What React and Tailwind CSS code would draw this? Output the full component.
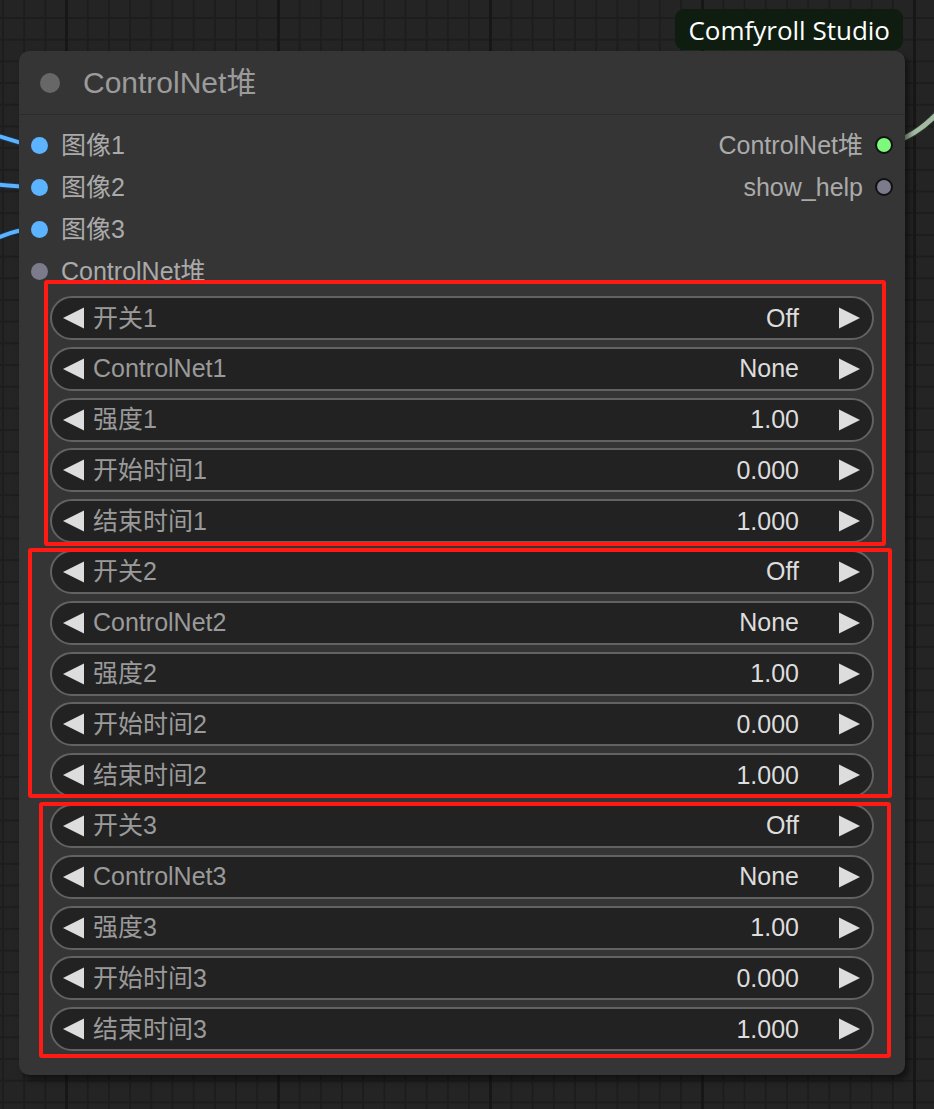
import React from "react";

const F = "font-['Liberation_Sans','Noto_Sans_CJK_SC',sans-serif]";

function LeftArrow() {
  return (
    <svg width="21" height="22" viewBox="0 0 21 22" className="shrink-0">
      <polygon points="21,0.5 21,21.5 0,11" fill="#dddddd" />
    </svg>
  );
}
function RightArrow() {
  return (
    <svg width="21" height="22" viewBox="0 0 21 22" className="shrink-0">
      <polygon points="0,0.5 0,21.5 21,11" fill="#dddddd" />
    </svg>
  );
}

function Widget({ label, value }) {
  return (
    <div className="h-[44px] mx-[31px] rounded-full border-2 border-[#626262] bg-[#222222] flex items-center pl-[11px] pr-[12px]">
      <LeftArrow />
      <span className={`ml-[9px] text-[25px] leading-none text-[#9a9a9a] ${F}`}>{label}</span>
      <span className={`ml-auto text-[25px] leading-none text-[#dddddd] ${F}`}>{value}</span>
      <span className="w-[40px]" />
      <RightArrow />
    </div>
  );
}

const groups = [1, 2, 3];

export default function App() {
  return (
    <div className="relative w-[934px] h-[1109px] overflow-hidden bg-[#242424] bg-[linear-gradient(to_right,#171717_3px,transparent_3px),linear-gradient(to_right,#1d1d1d_2px,transparent_2px),linear-gradient(to_bottom,#1d1d1d_2px,transparent_2px)] bg-[size:212px_100%,21.2px_21.2px,21.7px_21.7px] bg-[position:65px_0,2px_0,0_17px]">
      {/* wires */}
      <svg className="absolute left-0 top-0" width="934" height="1109">
        <g fill="none" strokeLinecap="round">
          <path d="M-10 134 C 5 137, 10 141, 30 145" stroke="#1a3550" strokeWidth="6" />
          <path d="M-10 134 C 5 137, 10 141, 30 145" stroke="#5cb3ff" strokeWidth="4" />
          <path d="M-10 184 C 5 185, 10 186, 30 187" stroke="#1a3550" strokeWidth="6" />
          <path d="M-10 184 C 5 185, 10 186, 30 187" stroke="#5cb3ff" strokeWidth="4" />
          <path d="M-10 240 C 5 236, 10 231, 30 229" stroke="#1a3550" strokeWidth="6" />
          <path d="M-10 240 C 5 236, 10 231, 30 229" stroke="#5cb3ff" strokeWidth="4" />
          <path d="M880 145 C 905 142, 925 128, 945 105" stroke="#2b332b" strokeWidth="7" />
          <path d="M880 145 C 905 142, 925 128, 945 105" stroke="#a3bba3" strokeWidth="5" />
        </g>
      </svg>

      <div className="relative pl-[19px] pt-[9px] w-[905px]">
        {/* badge */}
        <div className="flex justify-end pr-[2px]">
          <div className="h-[41px] px-[13px] rounded-[9px] bg-[#0e1d10] flex items-center text-white text-[26px] font-['Open_Sans','Noto_Sans',sans-serif] leading-none">
            Comfyroll Studio
          </div>
        </div>

        {/* node */}
        <div className="mt-px w-[886px] rounded-[10px] bg-[#353535] shadow-[4px_5px_6px_rgba(0,0,0,0.5)] pb-[24px]">
          <div className="h-[64px] flex items-center border-b border-[#2b2b2b] pl-[21px]">
            <div className="w-[20px] h-[20px] rounded-full bg-[#676767]" />
            <span className={`ml-[23px] text-[30px] leading-none text-[#9b9b9b] ${F}`}>ControlNet堆</span>
          </div>

          <div className="pt-[9px] flex justify-between">
            <div className="flex flex-col">
              {[
                ["图像1", "bg-[#5cb3ff]"],
                ["图像2", "bg-[#5cb3ff]"],
                ["图像3", "bg-[#5cb3ff]"],
                ["ControlNet堆", "bg-[#7b7b8c]"],
              ].map(([t, c]) => (
                <div key={t} className="h-[42px] flex items-center pl-[12px]">
                  <div className={`w-[17px] h-[17px] rounded-full ${c}`} />
                  <span className={`ml-[13px] text-[25px] leading-none text-[#aaaaaa] ${F}`}>{t}</span>
                </div>
              ))}
            </div>
            <div className="flex flex-col">
              {[
                ["ControlNet堆", "bg-[#7cfa7c]"],
                ["show_help", "bg-[#7b7b8c]"],
              ].map(([t, c]) => (
                <div key={t} className="h-[42px] flex items-center justify-end pr-[12px]">
                  <span className={`mr-[12px] text-[25px] leading-none text-[#aaaaaa] ${F}`}>{t}</span>
                  <div className={`w-[18px] h-[18px] rounded-full border-2 border-[#111111] ${c}`} />
                </div>
              ))}
            </div>
          </div>

          <div className="mt-[4px] flex flex-col gap-[6.8px]">
            {groups.map((n) => (
              <React.Fragment key={n}>
                <Widget label={`开关${n}`} value="Off" />
                <Widget label={`ControlNet${n}`} value="None" />
                <Widget label={`强度${n}`} value="1.00" />
                <Widget label={`开始时间${n}`} value="0.000" />
                <Widget label={`结束时间${n}`} value="1.000" />
              </React.Fragment>
            ))}
          </div>
        </div>
      </div>

      {/* annotation boxes */}
      <div className="absolute left-[44px] top-[280px] w-[842px] h-[266px] border-4 border-[#ff1a14] rounded-[3px]" />
      <div className="absolute left-[28px] top-[548px] w-[864px] h-[250px] border-4 border-[#ff1a14] rounded-[3px]" />
      <div className="absolute left-[39px] top-[802px] w-[852px] h-[256px] border-4 border-[#ff1a14] rounded-[3px]" />
    </div>
  );
}
